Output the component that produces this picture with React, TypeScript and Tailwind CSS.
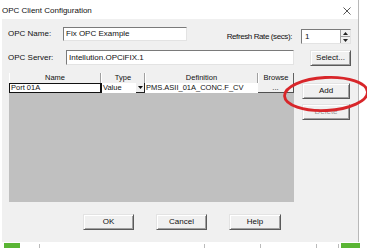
import React from "react";

const raised =
  "bg-[#f0f0f0] border border-t-[#e3e3e3] border-l-[#e3e3e3] border-r-[#5a5a5a] border-b-[#5a5a5a] shadow-[inset_1px_1px_0_#ffffff,inset_-1px_-1px_0_#a0a0a0]";
const sunken =
  "bg-white border border-t-[#7a7a7a] border-l-[#7a7a7a] border-r-[#e3e3e3] border-b-[#e3e3e3]";

function Btn({ label, w, disabled }: { label: string; w: string; disabled?: boolean }) {
  return (
    <div
      className={`${raised} ${w} h-[16px] flex items-center justify-center text-[8px] leading-none ${
        disabled ? "text-[#9c9c9c]" : "text-[#111]"
      }`}
    >
      {label}
    </div>
  );
}

export default function App() {
  return (
    <div
      className="relative w-[367px] h-[248px] bg-white overflow-hidden text-[#111]"
      style={{ fontFamily: '"Liberation Sans", Arial, sans-serif' }}
    >
      {/* Title bar */}
      <div className="w-[359px] h-[19px] flex items-center justify-between pl-[2px] pr-[7px] border-r border-[#b8b8b8]">
        <span className="text-[8px] leading-none mt-[2px]">OPC Client Configuration</span>
        <svg width="8" height="8" viewBox="0 0 8 8" className="mt-[3px]">
          <path d="M0.5 0.5 L7.5 7.5 M7.5 0.5 L0.5 7.5" stroke="#444" strokeWidth="0.9" />
        </svg>
      </div>

      {/* Body */}
      <div className="ml-[2px] w-[357px] h-[223px] bg-[#f0f0f0] border-r border-[#b8b8b8] pt-[8px] flex flex-col text-[8px] leading-none">
        {/* Row 1 */}
        <div className="flex h-[17px] items-start">
          <div className="ml-[6px] w-[55px] h-[14px] flex items-center">OPC Name:</div>
          <div className={`${sunken} w-[124px] h-[14px] flex items-center pl-[2px]`}>Fix OPC Example</div>
          <div className="ml-[39px] w-[66px] h-[15px] mt-[2px] flex items-center justify-end whitespace-nowrap tracking-[-0.4px]">
            Refresh Rate (secs):
          </div>
          <div className={`${sunken} ml-[9px] mt-[2px] w-[50px] h-[15px] flex items-center`}>
            <span className="pl-[3px] flex-1">1</span>
            <div className="w-[10px] h-full flex flex-col border-l border-[#a0a0a0]">
              <div className="flex-1 flex items-center justify-center bg-[#f0f0f0] border-b border-[#a0a0a0]">
                <svg width="5" height="3" viewBox="0 0 5 3">
                  <path d="M0 3 L2.5 0 L5 3 Z" fill="#222" />
                </svg>
              </div>
              <div className="flex-1 flex items-center justify-center bg-[#f0f0f0]">
                <svg width="5" height="3" viewBox="0 0 5 3">
                  <path d="M0 0 L2.5 3 L5 0 Z" fill="#222" />
                </svg>
              </div>
            </div>
          </div>
        </div>

        {/* Row 2 */}
        <div className="flex h-[16px] mt-[6px] items-start">
          <div className="ml-[6px] w-[58px] h-[15px] flex items-center">OPC Server:</div>
          <div className={`${sunken} w-[228px] h-[15px] flex items-center pl-[2px]`}>Intellution.OPCiFIX.1</div>
          <div className="ml-[16px]">
            <Btn label="Select..." w="w-[41px]" />
          </div>
        </div>

        {/* Main area */}
        <div className="flex mt-[7px] h-[129px]">
          {/* Grid */}
          <div className="ml-[7px] w-[285px] h-full bg-[#c0c0c0] flex flex-col text-[7.5px]">
            <div className="flex h-[10px] bg-[#f0f0f0]">
              <div className="w-[92px] flex items-center justify-center border-r border-[#a0a0a0] border-l border-l-white">Name</div>
              <div className="w-[44px] flex items-center justify-center border-r border-[#a0a0a0] border-l border-l-white">Type</div>
              <div className="w-[113px] flex items-center justify-center border-r border-[#a0a0a0] border-l border-l-white">Definition</div>
              <div className="w-[36px] flex items-center justify-center border-r border-[#606060] border-l border-l-white">Browse</div>
            </div>
            <div className="flex h-[10px]">
              <div className="w-[92px] bg-white border border-[#111] flex items-center pl-[1px]">Port 01A</div>
              <div className="w-[44px] bg-white flex items-center border-l border-[#111]">
                <span className="flex-1 pl-[1px]">Value</span>
                <div className="w-[9px] h-full flex items-center justify-center bg-[#f0f0f0] border-r border-b border-[#222]">
                  <svg width="5" height="3" viewBox="0 0 5 3">
                    <path d="M0 0 L2.5 3 L5 0 Z" fill="#111" />
                  </svg>
                </div>
              </div>
              <div className="w-[113px] bg-white flex items-center pl-[1px] whitespace-nowrap">PMS.ASII_01A_CONC.F_CV</div>
              <div className="w-[36px] bg-[#f0f0f0] border-r border-b border-[#505050] flex items-end justify-center pb-[1px]">
                ...
              </div>
            </div>
          </div>

          {/* Right column */}
          <div className="ml-[8px] flex flex-col">
            <div className="mt-[10px]">
              <Btn label="Add" w="w-[48px]" />
            </div>
            <div className="mt-[5px]">
              <Btn label="Delete" w="w-[48px]" disabled />
            </div>
          </div>
        </div>

        {/* Bottom buttons */}
        <div className="flex mt-[12px]">
          <div className="ml-[81px]">
            <Btn label="OK" w="w-[51px]" />
          </div>
          <div className="ml-[22px]">
            <Btn label="Cancel" w="w-[51px]" />
          </div>
          <div className="ml-[22px]">
            <Btn label="Help" w="w-[52px]" />
          </div>
        </div>
      </div>

      {/* Bottom strip */}
      <div className="flex h-[6px] items-end">
        <div className="ml-[4px] w-[16px] h-[5px] bg-[#5ab534]" />
        <div className="ml-[19px] w-px h-[4px] bg-[#bbb]" />
        <div className="ml-[164px] w-px h-[4px] bg-[#bbb]" />
        <div className="ml-[55px] w-px h-[4px] bg-[#bbb]" />
        <div className="ml-[55px] w-px h-[4px] bg-[#bbb]" />
        <div className="ml-[21px] w-px h-[4px] bg-[#bbb]" />
        <div className="ml-[2px] w-[19px] h-[5px] bg-[#5ab534]" />
      </div>

      {/* Red ellipse annotation */}
      <svg
        className="absolute left-0 top-0 pointer-events-none"
        width="367"
        height="248"
        viewBox="0 0 367 248"
      >
        <ellipse
          cx="326"
          cy="94"
          rx="41.5"
          ry="16.5"
          fill="none"
          stroke="#d8262a"
          strokeWidth="2.8"
          transform="rotate(-3 326 94)"
        />
      </svg>
    </div>
  );
}
